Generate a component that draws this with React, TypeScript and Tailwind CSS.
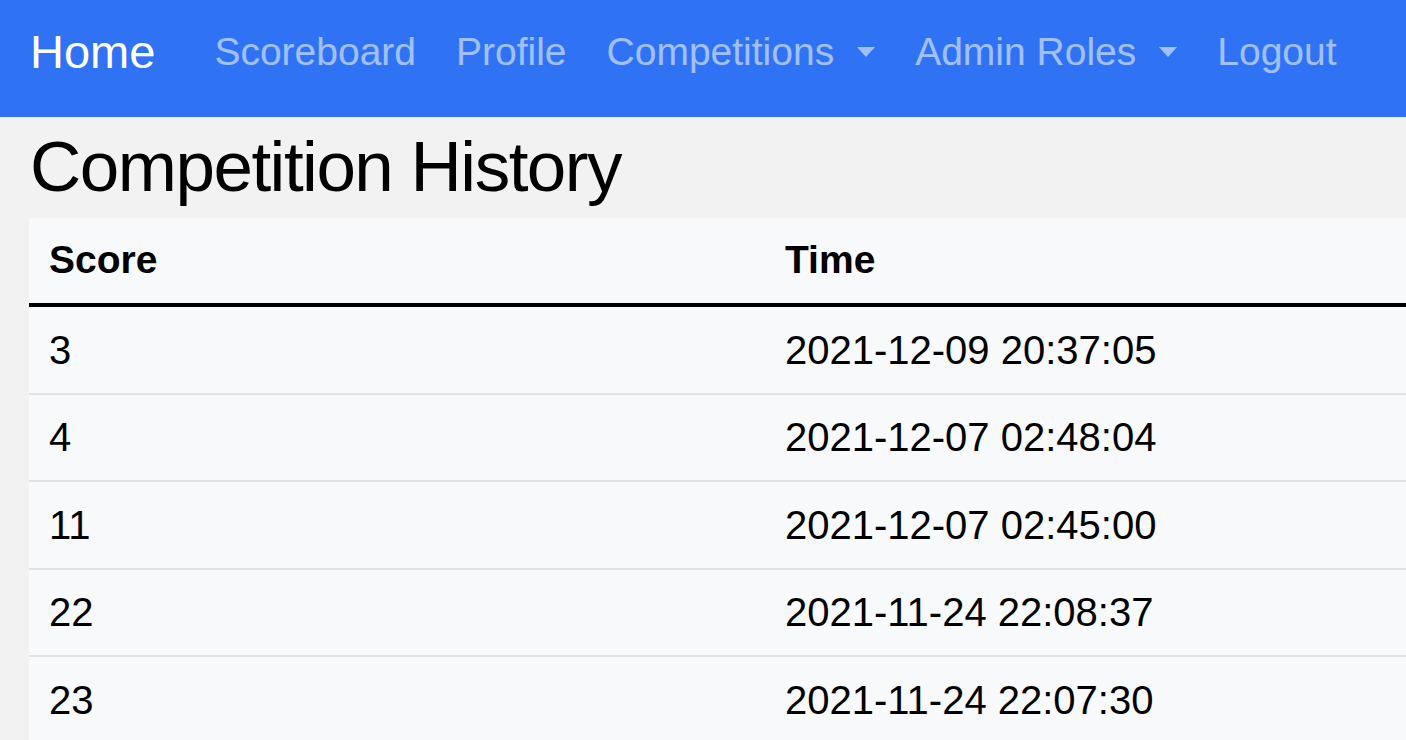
const links = [
  { label: "Scoreboard" },
  { label: "Profile" },
  { label: "Competitions", dropdown: true },
  { label: "Admin Roles", dropdown: true },
  { label: "Logout" },
];

const rows = [
  { score: "3", time: "2021-12-09 20:37:05" },
  { score: "4", time: "2021-12-07 02:48:04" },
  { score: "11", time: "2021-12-07 02:45:00" },
  { score: "22", time: "2021-11-24 22:08:37" },
  { score: "23", time: "2021-11-24 22:07:30" },
];

function Caret() {
  return (
    <span className="ml-[23px] inline-block h-0 w-0 border-x-[9px] border-t-[10px] border-x-transparent border-t-current" />
  );
}

export default function App() {
  return (
    <div className="min-h-screen w-full overflow-hidden bg-[#f2f2f2] font-['Liberation_Sans',Arial,sans-serif] text-black">
      <nav className="flex h-[117px] items-center bg-[#2f73f4] pb-[14px] pl-[30px]">
        <a className="mr-[39px] text-[47px] leading-none text-white">Home</a>
        <ul className="flex items-center">
          {links.map((l) => (
            <li key={l.label} className="flex items-center px-[20px] text-[39px] leading-none text-white/55">
              {l.label}
              {l.dropdown && <Caret />}
            </li>
          ))}
        </ul>
      </nav>

      <div className="pl-[29px]">
        <h1 className="flex h-[101px] items-center pl-[1px] text-[71px] tracking-[-1.5px]">Competition History</h1>

        <div className="w-full bg-[#f8f9fa]">
          <div className="flex h-[89px] items-center border-b-4 border-black text-[39px] font-bold">
            <div className="w-[736px] pl-[20px]">Score</div>
            <div className="pl-[20px]">Time</div>
          </div>
          {rows.map((r) => (
            <div key={r.time} className="flex h-[87.5px] items-center border-b-2 border-[#dee2e6] text-[40px]">
              <div className="w-[736px] pl-[20px]">{r.score}</div>
              <div className="pl-[20px]">{r.time}</div>
            </div>
          ))}
        </div>
      </div>
    </div>
  );
}
